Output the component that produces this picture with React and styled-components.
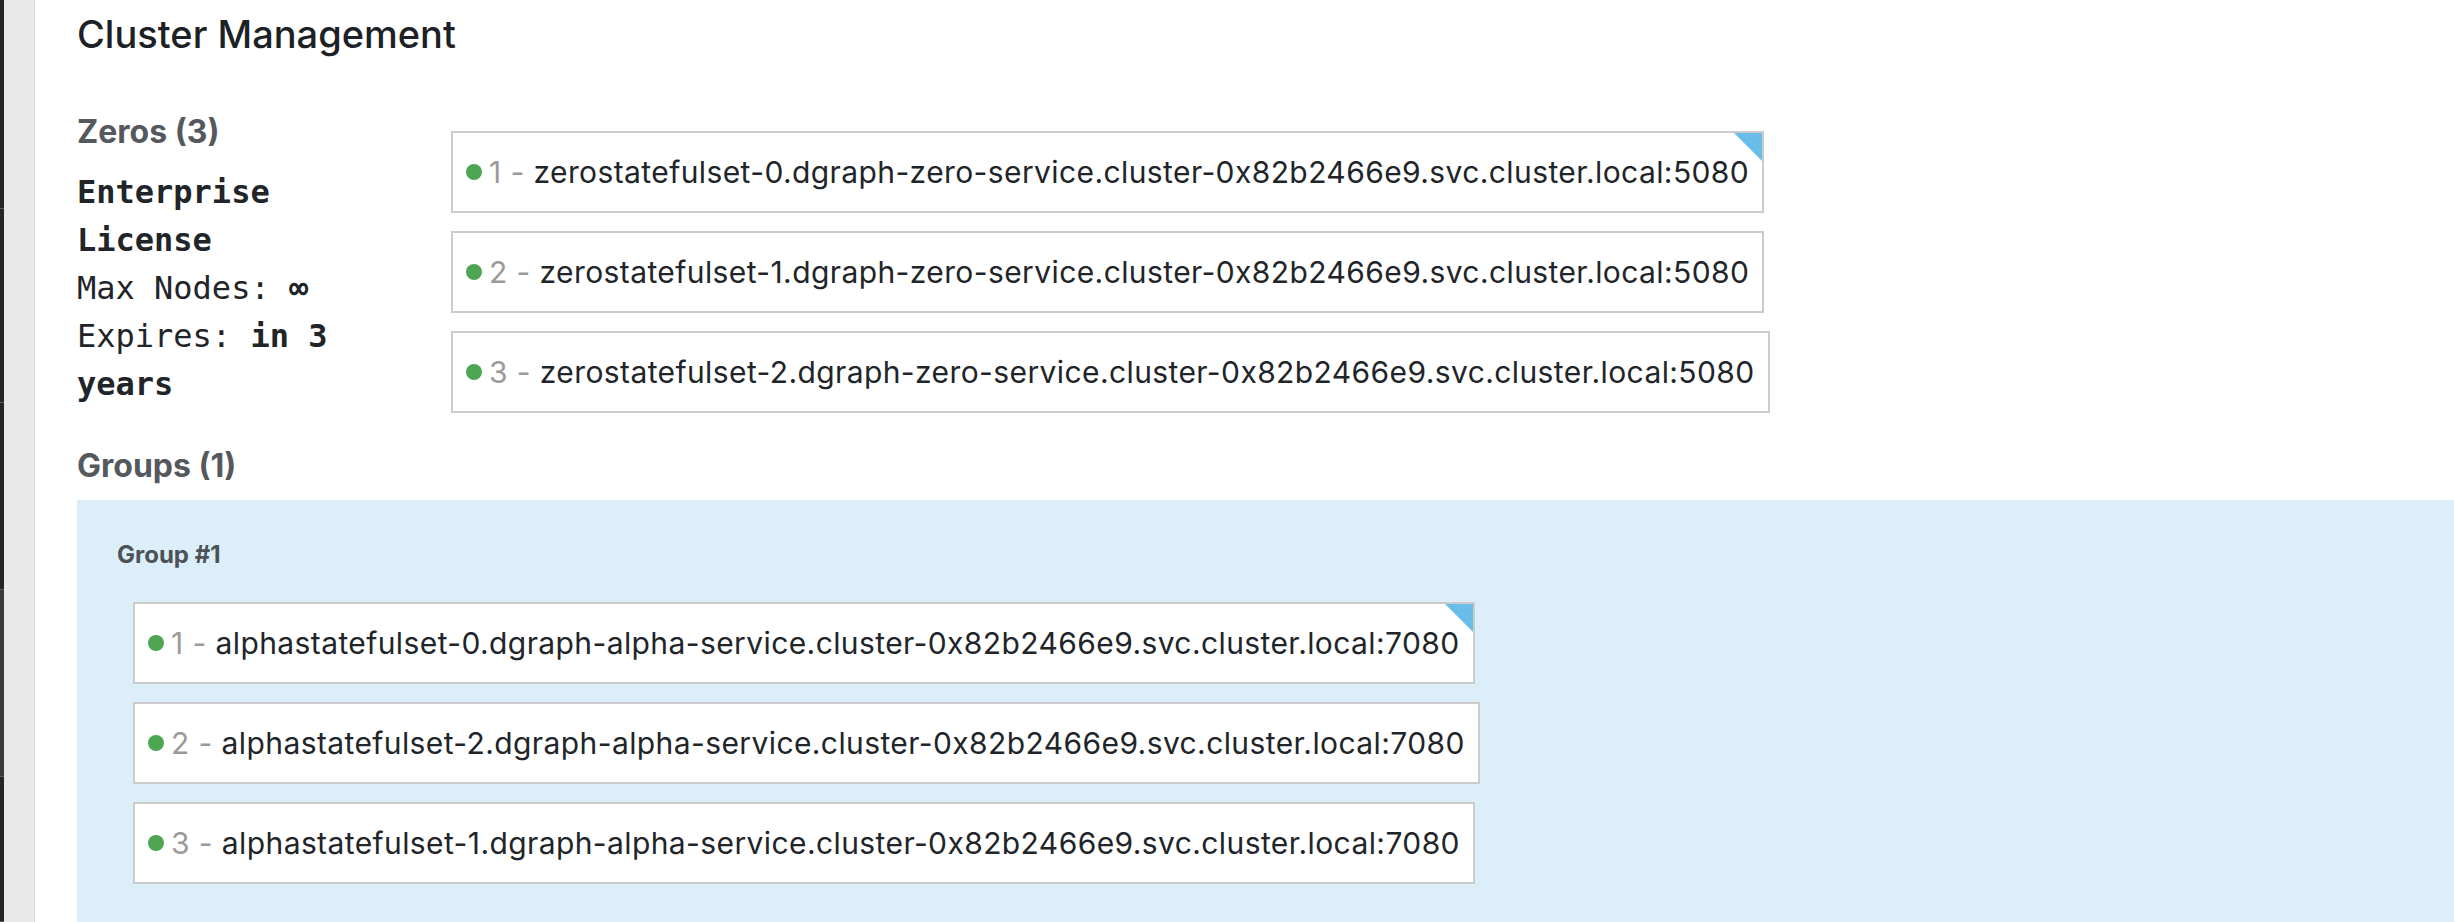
import React from 'react'
import styled, { createGlobalStyle } from 'styled-components'

const GlobalStyle = createGlobalStyle`
  html, body {
    margin: 0;
    padding: 0;
    height: 922px;
    overflow: hidden;
    background: #fff;
  }
  body {
    font-family: Inter, "Liberation Sans", Arial, sans-serif;
    color: #212529;
  }
`

const zeros = [
    { id: 1, addr: 'zerostatefulset-0.dgraph-zero-service.cluster-0x82b2466e9.svc.cluster.local:5080', leader: true },
    { id: 2, addr: 'zerostatefulset-1.dgraph-zero-service.cluster-0x82b2466e9.svc.cluster.local:5080' },
    { id: 3, addr: 'zerostatefulset-2.dgraph-zero-service.cluster-0x82b2466e9.svc.cluster.local:5080' },
]

const groups = [
    {
        id: 1,
        alphas: [
            { id: 1, addr: 'alphastatefulset-0.dgraph-alpha-service.cluster-0x82b2466e9.svc.cluster.local:7080', leader: true },
            { id: 2, addr: 'alphastatefulset-2.dgraph-alpha-service.cluster-0x82b2466e9.svc.cluster.local:7080' },
            { id: 3, addr: 'alphastatefulset-1.dgraph-alpha-service.cluster-0x82b2466e9.svc.cluster.local:7080' },
        ],
    },
]

// dark rail segments on the far left (cropped sidebar)
const railSegments = [209, 194, 187, 187, 145]

function NodeBox({ node }) {
    return (
        <Node>
            <Dot />
            <Index>{node.id} - </Index>
            <Host>{node.addr}</Host>
            {node.leader && <LeaderMark />}
        </Node>
    )
}

function App() {
    return (
        <>
            <GlobalStyle />
            <Page>
                <Sidebar>
                    <Rail>
                        {railSegments.map((h, i) => (
                            <RailSegment key={i} style={{ height: h }} $light={i === 3} />
                        ))}
                    </Rail>
                    <SideTrack />
                </Sidebar>
                <Main>
                    <Title>Cluster Management</Title>

                    <ZeroRow>
                        <LeftCol>
                            <SectionTitle>Zeros ({zeros.length})</SectionTitle>
                            <License>
                                <LicenseLine><b>Enterprise License</b></LicenseLine>
                                <LicenseLine>Max Nodes: <b>∞</b></LicenseLine>
                                <LicenseLine>Expires: <b>in 3 years</b></LicenseLine>
                            </License>
                        </LeftCol>
                        <NodeList>
                            {zeros.map(z => <NodeBox key={z.id} node={z} />)}
                        </NodeList>
                    </ZeroRow>

                    <SectionTitle>Groups ({groups.length})</SectionTitle>
                    {groups.map(g => (
                        <GroupPanel key={g.id}>
                            <GroupTitle>Group #{g.id}</GroupTitle>
                            <NodeList $indent>
                                {g.alphas.map(a => <NodeBox key={a.id} node={a} />)}
                            </NodeList>
                        </GroupPanel>
                    ))}
                </Main>
            </Page>
        </>
    )
}

const Page = styled.div`
    display: flex;
    height: 922px;
`

const Sidebar = styled.div`
    display: flex;
    flex-shrink: 0;
    width: 35px;
`

const Rail = styled.div`
    width: 4px;
    display: flex;
    flex-direction: column;
`

const RailSegment = styled.div`
    background: ${p => (p.$light ? '#3a3a3a' : '#262626')};
    border-bottom: 1px solid #5a5a5a;
`

const SideTrack = styled.div`
    flex: 1;
    background: #e9e9e9;
    border-right: 1px solid #dcdcdc;
`

const Main = styled.div`
    flex: 1;
    padding: 10px 0 0 42px;
    min-width: 0;
`

const Title = styled.h1`
    margin: 0 0 55px;
    font-size: 38px;
    line-height: 48px;
    font-weight: 500;
    color: #1d2125;
`

const ZeroRow = styled.div`
    display: grid;
    grid-template-columns: 374px auto;
    margin-bottom: 34px;
`

const LeftCol = styled.div`
    padding-right: 60px;
`

const SectionTitle = styled.h2`
    margin: 0 0 15px;
    font-size: 32px;
    line-height: 38px;
    font-weight: 700;
    color: #55595d;
`

const License = styled.div`
    margin-top: 17px;
    font-family: "DejaVu Sans Mono", "Liberation Mono", monospace;
    font-size: 32px;
    line-height: 48px;
    color: #212529;
    b {
        font-weight: 700;
    }
`

const LicenseLine = styled.div``

const NodeList = styled.div`
    display: flex;
    flex-direction: column;
    align-items: flex-start;
    gap: 18px;
    padding-top: ${p => (p.$indent ? '0' : '18px')};
    padding-left: ${p => (p.$indent ? '16px' : '0')};
`

const Node = styled.div`
    position: relative;
    display: inline-flex;
    align-items: center;
    box-sizing: border-box;
    height: 82px;
    padding: 0 13px 0 13px;
    background: #fff;
    border: 2px solid #cbcbcb;
    font-size: 30px;
    letter-spacing: 0.4px;
    white-space: nowrap;
`

const Dot = styled.span`
    display: block;
    flex: 0 0 16px;
    width: 16px;
    height: 16px;
    border-radius: 50%;
    background: #4fa652;
    margin-right: 7px;
`

const Index = styled.span`
    color: #9a9a9a;
    white-space: pre;
`

const Host = styled.span`
    color: #212529;
`

const LeaderMark = styled.span`
    position: absolute;
    top: 0;
    right: 0;
    width: 0;
    height: 0;
    border-top: 28px solid #6bbde9;
    border-left: 28px solid transparent;
`

const GroupPanel = styled.div`
    background: #dbeef9;
    padding: 40px 0 80px 40px;
`

const GroupTitle = styled.h3`
    margin: 0 0 33px;
    font-size: 24px;
    line-height: 29px;
    font-weight: 700;
    color: #4d5257;
`

export default App
